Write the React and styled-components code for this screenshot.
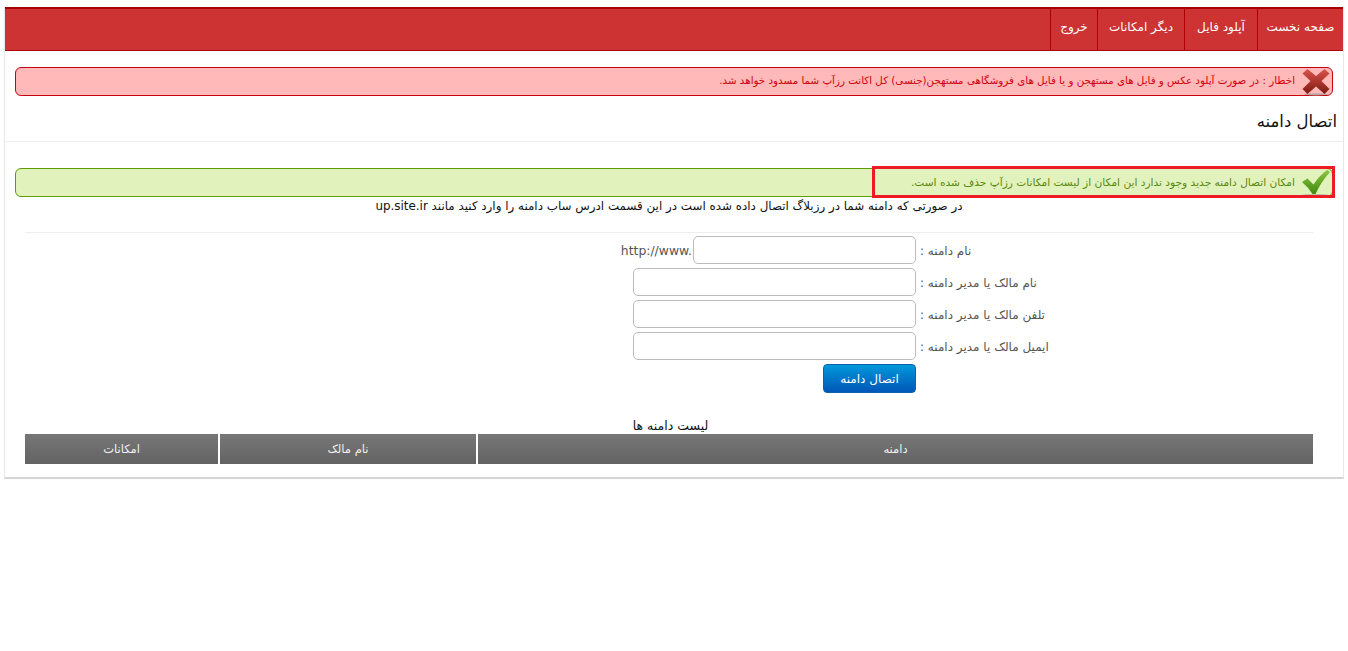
import React from "react";
import styled, { createGlobalStyle } from "styled-components";

const Global = createGlobalStyle`
  html, body { margin: 0; padding: 0; background: #fff; }
  body { font-family: "DejaVu Sans", "Liberation Sans", sans-serif; font-size: 11px; color: #555; }
`;
const Wrapper = styled.div`
  direction: rtl;
  width: 1340px;
  height: 472px;
  margin: 7px 0 0 4px;
  box-sizing: border-box;
  border-left: 1px solid #e8e8e8;
  border-right: 1px solid #e8e8e8;
  border-bottom: 2px solid #d5d5d5;
`;
const Header = styled.nav`
  display: flex;
  height: 44px;
  box-sizing: border-box;
  background: #cd3333;
  border-top: 2px solid #a80000;
  border-bottom: 1px solid #b00000;
`;
const NavItem = styled.a`
  display: flex;
  align-items: center;
  justify-content: center;
  width: ${p => p.$w}px;
  box-sizing: border-box;
  border-left: 1px solid #b00000;
  color: #fff;
  font-size: 12px;
  padding-bottom: 5px;
`;
const Alert = styled.div`
  position: relative;
  display: flex;
  align-items: center;
  height: 29px;
  box-sizing: border-box;
  margin: ${p => p.$top}px 10px 0 10px;
  padding-bottom: ${p => p.$ok ? "1px" : "3px"};
  border: 1px solid ${p => p.$ok ? "#5a9e00" : "#c80010"};
  border-radius: 6px;
  background: ${p => p.$ok ? "#e1f2bc" : "#ffb9b9"};
  color: ${p => p.$ok ? "#5b8a10" : "#d00010"};
  font-size: ${p => p.$ok ? "10.6px" : "10.3px"};
`;
const AlertIcon = styled.svg`
  width: 30px;
  height: 28px;
  margin: 0 1px 0 6px;
  flex: none;
  align-self: flex-start;
`;
const Highlight = styled.div`
  position: absolute;
  top: -3px;
  right: -3px;
  width: 463px;
  height: 32px;
  box-sizing: border-box;
  border: 3px solid #ed1c24;
`;
const Title = styled.h2`
  margin: 17px 6px 0 0;
  height: 28px;
  font-size: 16.5px;
  font-weight: normal;
  line-height: 17px;
  color: #111;
`;
const Rule = styled.div`
  height: 1px;
  background: #eeeeee;
  margin: ${p => p.$m || "0"};
`;
const Paragraph = styled.p`
  margin: 1px 0 0;
  padding-right: 10px;
  height: 34px;
  text-align: center;
  color: #111;
  font-size: 11.9px;
  line-height: 17px;
`;
const Form = styled.form`
  display: flex;
  flex-direction: column;
  gap: 4px;
  margin-top: 3px;
`;
const Row = styled.div`
  display: flex;
  align-items: center;
  height: 28px;
`;
const Label = styled.label`
  width: 427px;
  text-align: left;
  padding: 2px 0 0 4px;
  box-sizing: border-box;
  font-size: 12px;
  color: #555;
`;
const Input = styled.input`
  width: ${p => p.$w}px;
  height: 28px;
  box-sizing: border-box;
  border: 1px solid #bbbbbb;
  border-radius: 5px;
  background: #fff;
  padding: 0 6px;
  margin: 0;
`;
const Prefix = styled.span`
  direction: ltr;
  font-size: 12.4px;
  color: #555;
  margin-right: 1px;
`;
const Submit = styled.button`
  width: 93px;
  height: 29px;
  margin: 0 427px 0 0;
  padding: 0;
  border: 1px solid #0a62b0;
  border-radius: 4px;
  background: linear-gradient(#0098da, #0057b8);
  color: #fff;
  font-family: inherit;
  font-size: 12px;
  align-self: flex-start;
`;
const Caption = styled.div`
  margin-top: 24px;
  padding-right: 7px;
  height: 17px;
  text-align: center;
  color: #111;
  font-size: 12.5px;
  line-height: 17px;
`;
const Table = styled.table`
  width: 1288px;
  margin: 0 30px 0 20px;
  table-layout: fixed;
  border-collapse: separate;
  border-spacing: 0;
`;
const Head = styled.th`
  width: ${p => p.$w}px;
  height: 30px;
  padding: 0;
  border-left: ${p => p.$last ? "0" : "2px solid #fff"};
  background: linear-gradient(#777777, #636363);
  background-clip: padding-box;
  color: #f0f0f0;
  font-size: 11.5px;
  font-weight: normal;
  box-sizing: border-box;
`;

const Cross = () => (
  <AlertIcon viewBox="0 0 30 28">
    <defs>
      <linearGradient id="xg" x1="0" y1="0" x2="0" y2="1">
        <stop offset="0" stopColor="#d9534a" />
        <stop offset="1" stopColor="#7d1a12" />
      </linearGradient>
    </defs>
    <ellipse cx="15" cy="26.3" rx="12" ry="1.1" fill="#b9a8a0" />
    <path d="M6.5 1 L15 8 L23.5 1 L28.5 5.5 L20.5 13 L28.5 21 L23.5 26 L15 18.5 L6.5 26 L1.5 21 L9.5 13 L1.5 5.5 Z" fill="url(#xg)" />
  </AlertIcon>
);
const Check = () => (
  <AlertIcon viewBox="0 0 30 28">
    <defs>
      <linearGradient id="cg" x1="0" y1="0" x2="0" y2="1">
        <stop offset="0" stopColor="#8cc63f" />
        <stop offset="1" stopColor="#3f8a10" />
      </linearGradient>
    </defs>
    <ellipse cx="14" cy="26" rx="13" ry="1.1" fill="#b5c2a0" />
    <path d="M1 13 L6.5 9.5 L12.5 15.5 Q18 7 26 1 L29 3 Q20 13 14.5 25 L11.5 25 Q7 18 1 13 Z" fill="url(#cg)" />
  </AlertIcon>
);

export default function App() {
  return (
    <>
      <Global />
      <Wrapper>
        <Header>
          <NavItem $w={86}>صفحه نخست</NavItem>
          <NavItem $w={73}>آپلود فایل</NavItem>
          <NavItem $w={87}>دیگر امکانات</NavItem>
          <NavItem $w={47}>خروج</NavItem>
        </Header>
        <Alert $top={16}>
          <Cross />
          اخطار : در صورت آپلود عکس و فایل های مستهجن و یا فایل های فروشگاهی مستهجن(جنسی) کل اکانت رزآپ شما مسدود خواهد شد.
        </Alert>
        <Title>اتصال دامنه</Title>
        <Rule />
        <Alert $ok $top={26}>
          <Check />
          امکان اتصال دامنه جدید وجود ندارد این امکان از لیست امکانات رزآپ حذف شده است.
          <Highlight />
        </Alert>
        <Paragraph>در صورتی که دامنه شما در رزبلاگ اتصال داده شده است در این قسمت ادرس ساب دامنه را وارد کنید مانند up.site.ir</Paragraph>
        <Rule $m="0 30px 0 20px" />
        <Form>
          <Row><Label>نام دامنه :</Label><Input $w={223} /><Prefix>http://www.</Prefix></Row>
          <Row><Label>نام مالک یا مدیر دامنه :</Label><Input $w={283} /></Row>
          <Row><Label>تلفن مالک یا مدیر دامنه :</Label><Input $w={283} /></Row>
          <Row><Label>ایمیل مالک یا مدیر دامنه :</Label><Input $w={283} /></Row>
          <Submit type="button">اتصال دامنه</Submit>
        </Form>
        <Caption>لیست دامنه ها</Caption>
        <Table>
          <thead>
            <tr>
              <Head $w={837}>دامنه</Head>
              <Head $w={258}>نام مالک</Head>
              <Head $w={193} $last>امکانات</Head>
            </tr>
          </thead>
        </Table>
      </Wrapper>
    </>
  );
}
